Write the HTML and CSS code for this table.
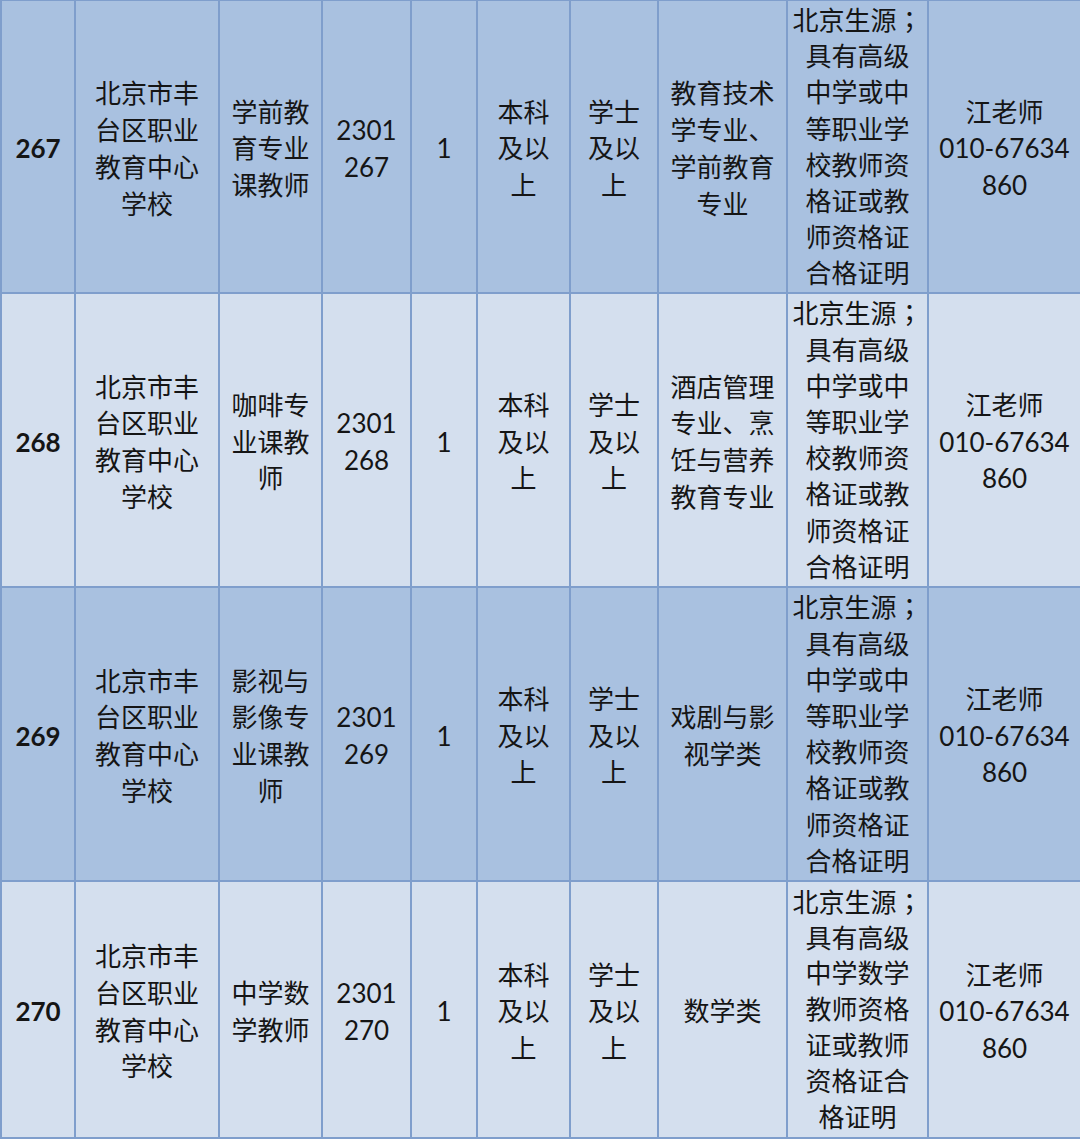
FILE: index.html
```html
<!DOCTYPE html>
<html lang="zh-CN">
<head>
<meta charset="utf-8">
<title>岗位表</title>
<link rel="stylesheet" href="styles.css">
</head>
<body>
<table class="jobs">
  <colgroup>
    <col class="c1"><col class="c2"><col class="c3"><col class="c4"><col class="c5">
    <col class="c6"><col class="c7"><col class="c8"><col class="c9"><col class="c10">
  </colgroup>
  <tbody>
    <tr class="row dark first">
      <td class="num">267</td>
      <td>北京市丰<br>台区职业<br>教育中心<br>学校</td>
      <td>学前教<br>育专业<br>课教师</td>
      <td>2301<br>267</td>
      <td>1</td>
      <td>本科<br>及以<br>上</td>
      <td>学士<br>及以<br>上</td>
      <td>教育技术<br>学专业、<br>学前教育<br>专业</td>
      <td class="req">北京生源<span class="punct" lang="zh-TW">；</span><br>具有高级<br>中学或中<br>等职业学<br>校教师资<br>格证或教<br>师资格证<br>合格证明</td>
      <td>江老师<br>010-67634<br>860</td>
    </tr>
    <tr class="row light">
      <td class="num">268</td>
      <td>北京市丰<br>台区职业<br>教育中心<br>学校</td>
      <td>咖啡专<br>业课教<br>师</td>
      <td>2301<br>268</td>
      <td>1</td>
      <td>本科<br>及以<br>上</td>
      <td>学士<br>及以<br>上</td>
      <td>酒店管理<br>专业、烹<br>饪与营养<br>教育专业</td>
      <td class="req">北京生源<span class="punct" lang="zh-TW">；</span><br>具有高级<br>中学或中<br>等职业学<br>校教师资<br>格证或教<br>师资格证<br>合格证明</td>
      <td>江老师<br>010-67634<br>860</td>
    </tr>
    <tr class="row dark">
      <td class="num">269</td>
      <td>北京市丰<br>台区职业<br>教育中心<br>学校</td>
      <td>影视与<br>影像专<br>业课教<br>师</td>
      <td>2301<br>269</td>
      <td>1</td>
      <td>本科<br>及以<br>上</td>
      <td>学士<br>及以<br>上</td>
      <td>戏剧与影<br>视学类</td>
      <td class="req">北京生源<span class="punct" lang="zh-TW">；</span><br>具有高级<br>中学或中<br>等职业学<br>校教师资<br>格证或教<br>师资格证<br>合格证明</td>
      <td>江老师<br>010-67634<br>860</td>
    </tr>
    <tr class="row light last">
      <td class="num">270</td>
      <td>北京市丰<br>台区职业<br>教育中心<br>学校</td>
      <td>中学数<br>学教师</td>
      <td>2301<br>270</td>
      <td>1</td>
      <td>本科<br>及以<br>上</td>
      <td>学士<br>及以<br>上</td>
      <td>数学类</td>
      <td class="req tight">北京生源<span class="punct" lang="zh-TW">；</span><br>具有高级<br>中学数学<br>教师资格<br>证或教师<br>资格证合<br>格证明</td>
      <td>江老师<br>010-67634<br>860</td>
    </tr>
  </tbody>
</table>
</body>
</html>
```

FILE: styles.css
```css
html, body {
  margin: 0;
  padding: 0;
  background: #d3deee;
}

body {
  overflow: hidden;
}

.jobs {
  border-collapse: collapse;
  table-layout: fixed;
  width: 1080px;
  margin-top: -1px;
  font-family: "Lato", "Noto Sans CJK SC", sans-serif;
  font-size: 26px;
  line-height: 36.7px;
  color: #151515;
}

.c1 { width: 74px; }
.c2 { width: 144px; }
.c3 { width: 103px; }
.c4 { width: 89px; }
.c5 { width: 66px; }
.c6 { width: 93px; }
.c7 { width: 88px; }
.c8 { width: 129px; }
.c9 { width: 141px; }
.c10 { width: 153px; }

.jobs td {
  border: 2px solid #7f9ecc;
  text-align: center;
  vertical-align: middle;
  padding: 5px 0 0;
  white-space: nowrap;
}

.row { height: 294px; }
.row.first { height: 292px; }
.row.last { height: 257px; }

.dark td { background: #a9c1e0; }
.light td { background: #d4dfee; }

.jobs td.num {
  font-weight: 700;
}

.jobs td.req {
  padding-top: 0;
  line-height: 36.2px;
}

.jobs td.tight {
  line-height: 35.8px;
}

.punct {
  font-family: "Noto Sans CJK TC", sans-serif;
}
```
